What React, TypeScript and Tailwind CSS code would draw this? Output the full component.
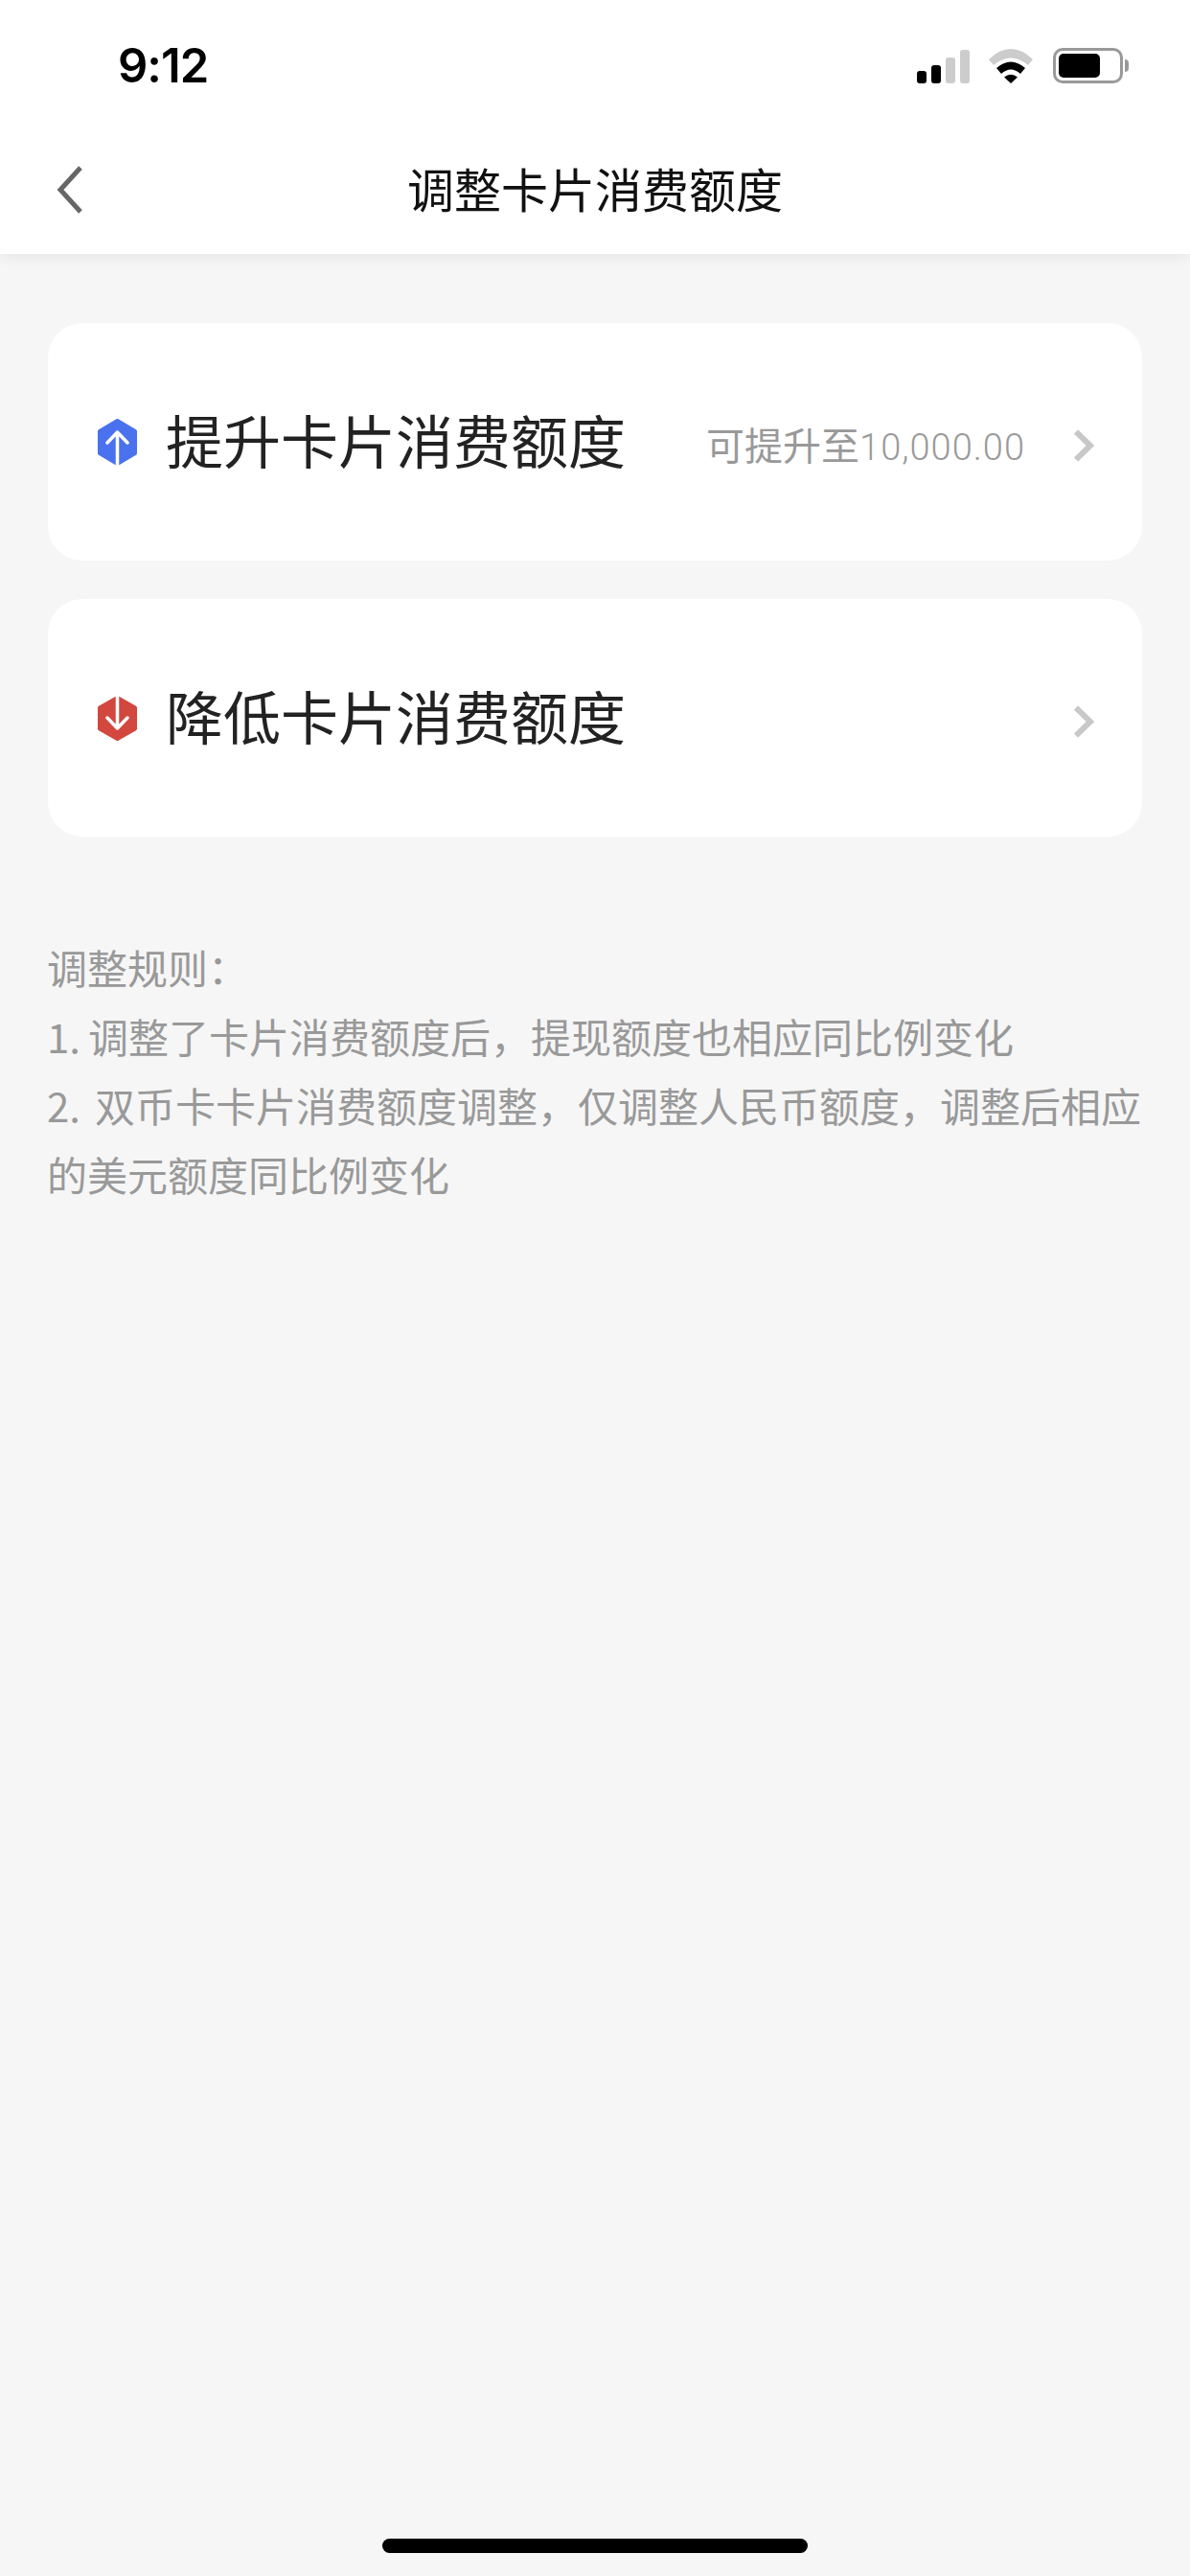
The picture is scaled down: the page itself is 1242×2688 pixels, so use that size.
const cjk = "font-['Noto_Sans_CJK_SC','Noto_Sans',sans-serif]";

function StatusIcons() {
  return (
    <div className="flex items-end">
      {/* signal bars */}
      <div className="flex items-end gap-[5px]">
        <div className="h-[13px] w-[10px] rounded-[3px] bg-black" />
        <div className="h-[19px] w-[10px] rounded-[3px] bg-black" />
        <div className="h-[27px] w-[10px] rounded-[3px] bg-[#cccccc]" />
        <div className="h-[35px] w-[10px] rounded-[3px] bg-[#cccccc]" />
      </div>
      <svg className="ml-[20px]" width="46" height="36" viewBox="0 0 46 36">
        <path d="M0 11 Q23 -11 46 11 L41 17 Q23 2 5 17 Z" fill="#cccccc" />
        <path d="M8 20 Q23 7 38 20 L33 26 Q23 17 13 26 Z" fill="#000" />
        <path d="M16 29.5 Q23 24 30 29.5 L23 36 Z" fill="#000" />
      </svg>
      {/* battery */}
      <div className="ml-[21px] flex items-center">
        <div className="h-[37px] w-[73px] rounded-[10px] border-[3px] border-[#999999] p-[3px]">
          <div className="h-full w-[43px] rounded-[5px] bg-black" />
        </div>
        <div className="ml-[2px] h-[13px] w-[4px] rounded-r-full bg-[#999999]" />
      </div>
    </div>
  );
}

function UpBadge() {
  return (
    <svg width="41" height="49" viewBox="0 0 41 49" className="shrink-0">
      <path d="M20.5 2 L39 13 L39 36 L20.5 47 L2 36 L2 13 Z" fill="#4a72ee" stroke="#4a72ee" strokeWidth="4" strokeLinejoin="round" />
      <path d="M20.5 14 V49 M10 25 L20.5 14 L31 25" fill="none" stroke="#fff" strokeWidth="3.5" strokeLinecap="round" strokeLinejoin="round" />
    </svg>
  );
}

function DownBadge() {
  return (
    <svg width="41" height="47" viewBox="0 0 41 47" className="shrink-0">
      <path d="M20.5 2 L39 12.5 L39 34.5 L20.5 45 L2 34.5 L2 12.5 Z" fill="#d2473e" stroke="#d2473e" strokeWidth="4" strokeLinejoin="round" />
      <path d="M20.5 0 V34 M10 23 L20.5 34 L31 23" fill="none" stroke="#fff" strokeWidth="3.5" strokeLinecap="round" strokeLinejoin="round" />
    </svg>
  );
}

function Chevron() {
  return (
    <svg width="22" height="34" viewBox="0 0 22 34" className="mt-[8px] shrink-0">
      <path d="M3 2.5 L18 17 L3 31.5" fill="none" stroke="#c8c8c8" strokeWidth="6" />
    </svg>
  );
}

function LimitRow({ icon, title, hint }: { icon: React.ReactNode; title: string; hint?: string }) {
  return (
    <div className="flex h-[248px] items-center rounded-[36px] bg-white pl-[52px] pr-[50px]">
      {icon}
      <span className="mb-[6px] ml-[30px] text-[60px] leading-none text-[#222222]">{title}</span>
      {hint && (
        <span className="ml-auto mt-[6px] text-[40px] leading-none text-[#999999]">
          {hint}
          <span className="font-['Roboto'] text-[38px] font-light tracking-[1px]">10,000.00</span>
        </span>
      )}
      <div className={hint ? "ml-[50px]" : "ml-auto"}>
        <Chevron />
      </div>
    </div>
  );
}

export default function App() {
  return (
    <div className={`flex min-h-[2688px] flex-col bg-[#f6f6f6] ${cjk}`}>
      <header className="relative bg-white shadow-[0_3px_14px_rgba(0,0,0,0.07)]">
        <div className="flex h-[136px] items-center justify-between pl-[123px] pr-[64px]">
          <span className="font-['Inter'] text-[49px] font-semibold leading-none tracking-[-1px] text-black">9:12</span>
          <StatusIcons />
        </div>
        <div className="relative flex h-[129px] items-center justify-center pb-[10px]">
          <svg width="28" height="50" viewBox="0 0 28 50" className="absolute left-[59px] top-[37px]">
            <path d="M25 2 L4 25 L25 48" fill="none" stroke="#666666" strokeWidth="5" />
          </svg>
          <h1 className="text-[49px] font-normal leading-none text-[#111111]">调整卡片消费额度</h1>
        </div>
      </header>

      <main className="px-[50px] pt-[72px]">
        <div className="flex flex-col gap-[40px]">
          <LimitRow icon={<UpBadge />} title="提升卡片消费额度" hint="可提升至" />
          <LimitRow icon={<DownBadge />} title="降低卡片消费额度" />
        </div>

        <div className="-ml-px mt-[100px] text-[42px] leading-[72px] text-[#999999]">
          <p>调整规则：</p>
          <p>
            <span className="inline-block w-[43px]">1.</span>调整了卡片消费额度后，提现额度也相应同比例变化
          </p>
          <p>
            <span className="inline-block w-[50px]">2.</span>双币卡卡片消费额度调整，仅调整人民币额度，调整后相应
            <br />
            的美元额度同比例变化
          </p>
        </div>
      </main>

      <div className="mb-[24px] mt-auto h-[15px] w-[444px] self-center rounded-[8px] bg-black" />
    </div>
  );
}
